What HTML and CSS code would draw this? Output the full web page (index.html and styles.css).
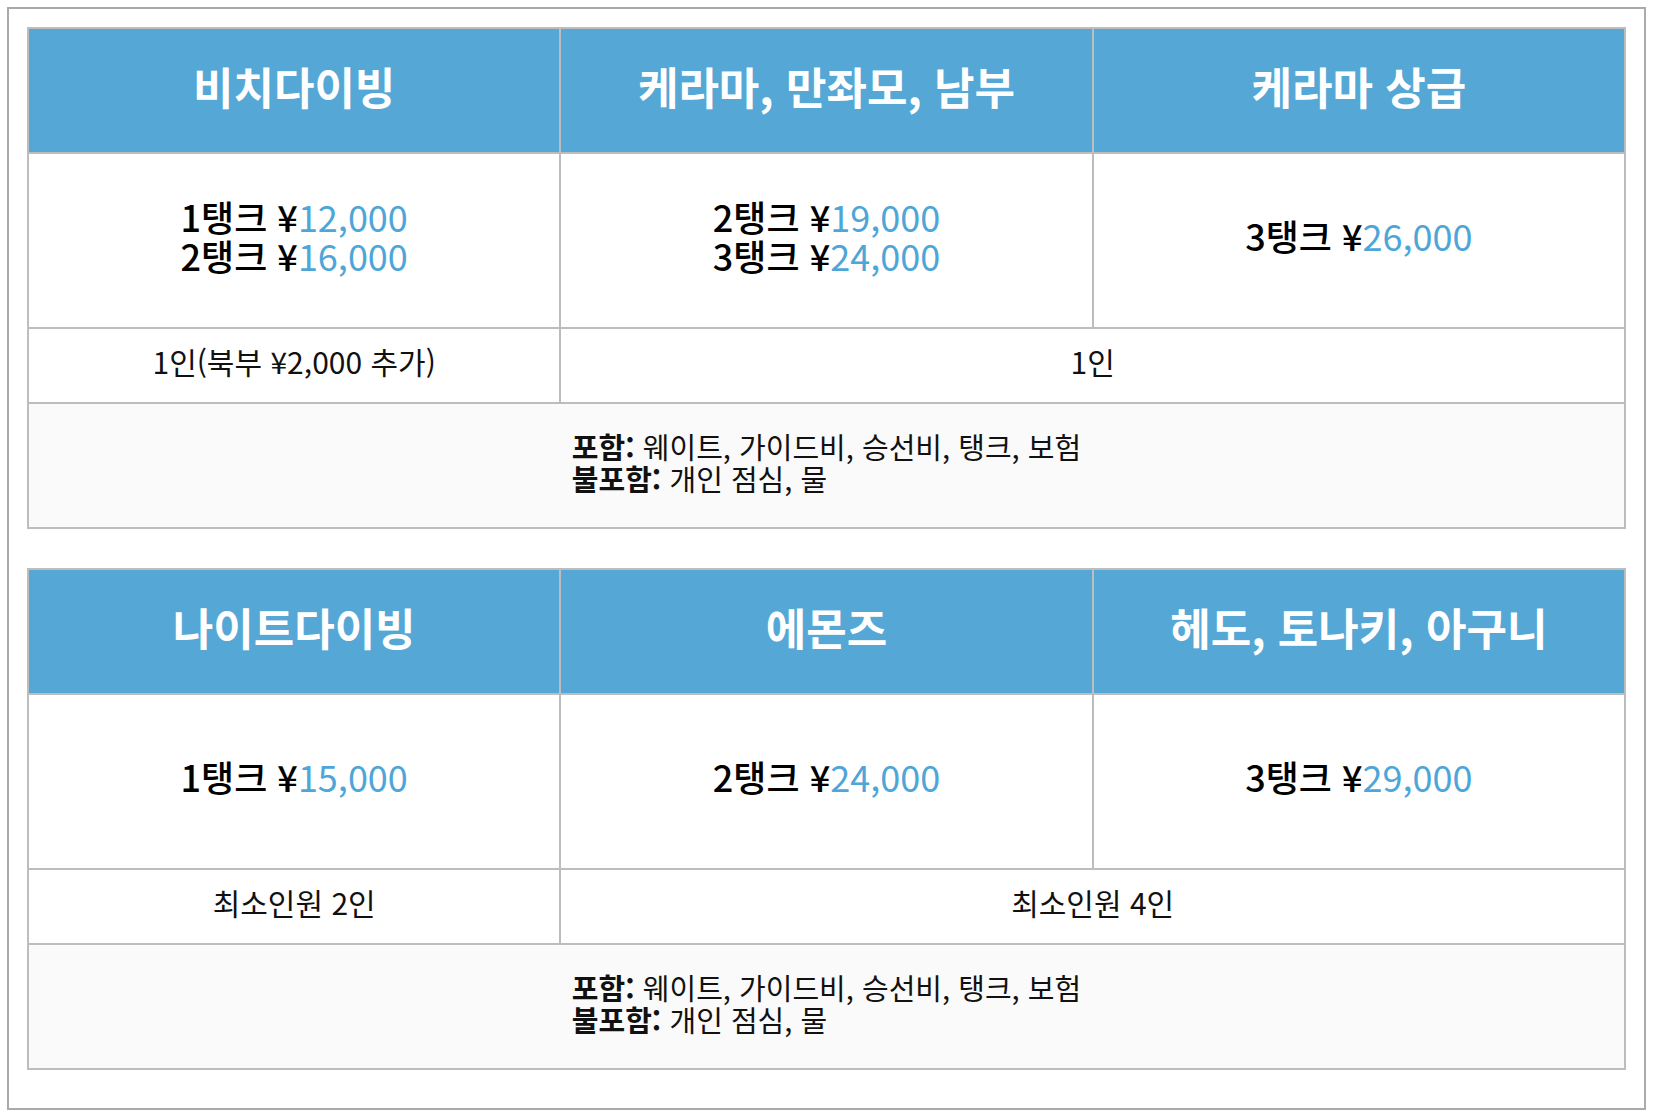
FILE: index.html
```html
<!DOCTYPE html>
<html lang="ko">
<head>
<meta charset="utf-8">
<title>다이빙 요금</title>
<link rel="stylesheet" href="styles.css">
</head>
<body>
<div class="wrap">
  <table class="price-table">
    <colgroup><col class="c"><col class="c"><col class="c"></colgroup>
    <tr class="head">
      <th>비치다이빙</th>
      <th>케라마, 만좌모, 남부</th>
      <th>케라마 상급</th>
    </tr>
    <tr class="prices">
      <td>1탱크 ¥<span class="num">12,000</span><br>2탱크 ¥<span class="num">16,000</span></td>
      <td>2탱크 ¥<span class="num">19,000</span><br>3탱크 ¥<span class="num">24,000</span></td>
      <td>3탱크 ¥<span class="num">26,000</span></td>
    </tr>
    <tr class="people">
      <td>1인(북부 ¥2,000 추가)</td>
      <td colspan="2">1인</td>
    </tr>
    <tr class="info">
      <td colspan="3"><div class="info-box"><b>포함:</b> 웨이트, 가이드비, 승선비, 탱크, 보험<br><b>불포함:</b> 개인 점심, 물</div></td>
    </tr>
  </table>
  <table class="price-table">
    <colgroup><col class="c"><col class="c"><col class="c"></colgroup>
    <tr class="head">
      <th>나이트다이빙</th>
      <th>에몬즈</th>
      <th>헤도, 토나키, 아구니</th>
    </tr>
    <tr class="prices">
      <td>1탱크 ¥<span class="num">15,000</span></td>
      <td>2탱크 ¥<span class="num">24,000</span></td>
      <td>3탱크 ¥<span class="num">29,000</span></td>
    </tr>
    <tr class="people">
      <td>최소인원 2인</td>
      <td colspan="2">최소인원 4인</td>
    </tr>
    <tr class="info">
      <td colspan="3"><div class="info-box"><b>포함:</b> 웨이트, 가이드비, 승선비, 탱크, 보험<br><b>불포함:</b> 개인 점심, 물</div></td>
    </tr>
  </table>
</div>
</body>
</html>
```

FILE: styles.css
```css
html, body {
  margin: 0;
  padding: 0;
  background: #ffffff;
}
body {
  padding: 7px 8px 8px 7px;
  font-family: "Noto Sans CJK KR", "Noto Sans", sans-serif;
  color: #111;
}
.wrap {
  border: 2px solid #aaaaaa;
  padding: 18px 18px 18px 18px;
}
.price-table {
  width: 100%;
  border-collapse: collapse;
  table-layout: fixed;
  margin-bottom: 39px;
}
.price-table:last-child {
  margin-bottom: 20px;
}
.price-table th,
.price-table td {
  border: 2px solid #bdbdbd;
  text-align: center;
  vertical-align: middle;
  padding: 0;
}
.head th {
  background: #55a8d6;
  color: #ffffff;
  font-weight: 700;
  font-size: 44px;
  line-height: 50px;
  height: 113px;
  padding-bottom: 10px;
}
.prices td {
  height: 163px;
  padding-bottom: 10px;
  font-size: 36px;
  line-height: 39px;
  font-weight: 500;
  color: #000;
}
.num {
  color: #4ea6d8;
  font-weight: 400;
}
.people td {
  height: 63px;
  padding-bottom: 10px;
  font-size: 30px;
  line-height: 36px;
  color: #111;
}
.info td {
  height: 115px;
  padding-bottom: 8px;
  background: #fafafa;
  font-size: 29px;
  line-height: 32px;
}
.info-box {
  display: inline-block;
  text-align: left;
}
.info-box b {
  font-weight: 700;
}
```
